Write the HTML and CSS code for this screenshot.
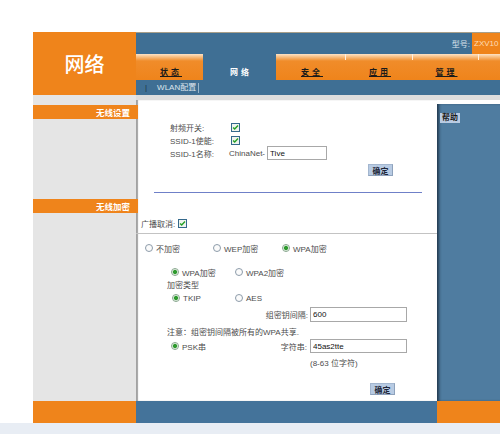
FILE: index.html
```html
<!DOCTYPE html>
<html lang="zh-CN">
<head>
<meta charset="utf-8">
<title>网络 - WLAN配置</title>
<link rel="stylesheet" href="styles.css">
</head>
<body>
<div class="page">
  <header class="header">
    <div class="logo">网络</div>
    <div class="header-main">
      <div class="model-row">
        <span class="model-label">型号:</span>
        <span class="model-box">ZXV10 I</span>
      </div>
      <nav class="tabs">
        <a class="tab w67">状态</a>
        <a class="tab active w73">网络</a>
        <a class="tab w69">安全</a>
        <a class="tab w67 sep">应用</a>
        <a class="tab w66 sep">管理</a>
        <span class="tab tab-fill sep"></span>
      </nav>
      <div class="subnav">
        <span class="sub-sep">|</span>
        <span class="sub-item">WLAN配置</span>
      </div>
    </div>
  </header>

  <div class="main">
    <aside class="sidebar">
      <div class="side-bar first">无线设置</div>
      <div class="side-bar second">无线加密</div>
    </aside>

    <section class="content">
      <div class="form-a">
        <div class="row">
          <span class="lbl">射频开关:</span>
          <svg class="cb" viewBox="0 0 9 9"><rect x=".5" y=".5" width="8" height="8" fill="#eef4ee" stroke="#34698c"/><path d="M2.1 4.4l1.6 1.7L7 2.6" fill="none" stroke="#25a025" stroke-width="1.4"/></svg>
        </div>
        <div class="row r2">
          <span class="lbl">SSID-1使能:</span>
          <svg class="cb" viewBox="0 0 9 9"><rect x=".5" y=".5" width="8" height="8" fill="#eef4ee" stroke="#34698c"/><path d="M2.1 4.4l1.6 1.7L7 2.6" fill="none" stroke="#25a025" stroke-width="1.4"/></svg>
        </div>
        <div class="row r3">
          <span class="lbl">SSID-1名称:</span>
          <span class="prefix">ChinaNet-</span>
          <input class="field ssid" type="text" value="Tive">
        </div>
      </div>
      <div class="btn-row btn-a"><span class="btn">确定</span></div>
      <div class="blue-line"></div>

      <div class="row broadcast">
        <span>广播取消:</span>
        <svg class="cb cb-b" viewBox="0 0 9 9"><rect x=".5" y=".5" width="8" height="8" fill="#eef4ee" stroke="#34698c"/><path d="M2.1 4.4l1.6 1.7L7 2.6" fill="none" stroke="#25a025" stroke-width="1.4"/></svg>
      </div>
      <div class="grey-line"></div>

      <div class="row radio-row">
        <span class="opt o68"><span class="radio"></span>不加密</span>
        <span class="opt o69"><span class="radio"></span>WEP加密</span>
        <span class="opt"><span class="radio on"></span>WPA加密</span>
      </div>
      <div class="row sub-row">
        <span class="opt o64"><span class="radio on"></span>WPA加密</span>
        <span class="opt"><span class="radio"></span>WPA2加密</span>
      </div>
      <div class="row type-label">加密类型</div>
      <div class="row tkip-row">
        <span class="opt o63"><span class="radio on"></span>TKIP</span>
        <span class="opt"><span class="radio"></span>AES</span>
      </div>
      <div class="row key-row">
        <span class="key-lbl">组密钥间隔:</span>
        <input class="field wide" type="text" value="600">
      </div>
      <div class="row note">注意：组密钥间隔被所有的WPA共享.</div>
      <div class="row psk-row">
        <span class="key-lbl psk"><span class="opt"><span class="radio on"></span>PSK串</span><span>字符串:</span></span>
        <input class="field wide h14" type="text" value="45as2tte">
      </div>
      <div class="row hint">(8-63 位字符)</div>
      <div class="btn-row btn-b"><span class="btn">确定</span></div>
    </section>

    <aside class="help">
      <div class="help-panel"><span class="help-label">帮助</span></div>
    </aside>
  </div>

  <footer class="footer">
    <div class="f-left"></div>
    <div class="f-mid"></div>
    <div class="f-right"></div>
  </footer>
</div>
<div class="bottom-strip"></div>
</body>
</html>
```

FILE: styles.css
```css
* { box-sizing: border-box; }
html, body { margin: 0; padding: 0; overflow: hidden; }
body {
  width: 500px;
  height: 434px;
  padding-top: 32px;
  background: #fff;
  font-family: "Liberation Sans", "Noto Sans CJK SC", sans-serif;
  font-size: 8px;
  color: #4c4c4c;
}
.page { width: 600px; margin-left: 33px; }

/* header */
.header { display: flex; height: 63px; }
.logo {
  width: 103px;
  background: #ef841b;
  color: #fff;
  font-family: "Noto Sans CJK SC", sans-serif;
  font-size: 20px;
  font-weight: 500;
  display: flex;
  align-items: center;
  justify-content: center;
}
.header-main { flex: 1; background: #3f6f94; display: flex; flex-direction: column; }
.model-row {
  height: 22px;
  border-top: 1px solid #a89f8a;
  display: flex;
  justify-content: flex-end;
}
.model-label { color: #dbe4ec; align-self: center; margin-right: 2px; }
.model-box {
  width: 161px;
  background: #ef841b;
  color: #fddcb6;
  padding-left: 2px;
  display: flex;
  align-items: center;
}
.tabs { height: 26px; display: flex; }
.tab {
  display: flex;
  align-items: center;
  justify-content: center;
  padding: 9px 0 0 3px;
  font-weight: bold;
  letter-spacing: 3px;
  color: #1a1a1a;
  text-decoration: underline;
  background: linear-gradient(#fde3c6 0, #f8bd80 3px, #f08c2a 7px, #ef841b 100%);
}
.tab.sep {
  background:
    linear-gradient(#fff0de, #fff0de) left top / 1px 6px no-repeat,
    linear-gradient(#fde3c6 0, #f8bd80 3px, #f08c2a 7px, #ef841b 100%);
}
.tab.active { background: none; color: #fff; text-decoration: none; }
.w67 { width: 67px; }
.w73 { width: 73px; }
.w69 { width: 69px; }
.w66 { width: 66px; }
.tab-fill { flex: 1; }
.subnav { height: 15px; display: flex; align-items: center; padding-left: 9px; }
.sub-sep { color: #1d3347; }
.sub-item { margin-left: 10px; padding-right: 2px; color: #dde5ec; border-right: 1px solid #9ab5ca; line-height: 10px; }

/* main */
.main { display: flex; height: 306px; }
.sidebar { width: 103px; background: #e5e5e5; padding-top: 10px; }
.side-bar {
  position: relative;
  z-index: 1;
  margin-right: -2px;
  height: 14px;
  background: #ef841b;
  color: #fff;
  font-weight: bold;
  font-size: 8.5px;
  display: flex;
  align-items: center;
  justify-content: flex-end;
  padding-right: 8px;
}
.side-bar.second { margin-top: 80px; }

.content {
  width: 301px;
  background: #fff;
  border-top: 5px solid #dddddd;
  box-shadow: inset 2px 0 1px #a2a2a2;
}
.row { display: flex; align-items: center; height: 12px; white-space: nowrap; }
.form-a { padding: 21px 0 0 34px; }
.r2 { margin-top: 1px; }
.r3 { height: 14px; }
.lbl { width: 59px; }
.cb { width: 9px; height: 9px; margin-left: 2px; }
.field {
  border: 1px solid #a8a8a8;
  padding: 0 2px;
  font-family: "Liberation Sans", "Noto Sans CJK SC", sans-serif;
  font-size: 8px;
  color: #111;
  background: #fff;
  outline: none;
  margin: 0;
}
.ssid { width: 60px; height: 14px; margin-left: 2px; }
.wide { width: 97px; height: 15px; }
.h14 { height: 14px; }

.btn-row { display: flex; justify-content: flex-end; height: 12px; }
.btn-a { margin-top: 4px; padding-right: 44px; }
.btn-b { margin-top: 15px; padding-right: 42px; }
.btn {
  width: 25px;
  height: 12px;
  background: #b8cbe3;
  border: 1px solid #a3b6cf;
  border-right-color: #8ea2bc;
  border-bottom-color: #8ea2bc;
  color: #1d2638;
  font-weight: bold;
  display: flex;
  align-items: center;
  justify-content: center;
}
.blue-line { margin: 16px 15px 0 18px; height: 1px; background: #6f80c8; }
.broadcast { margin-top: 24px; padding-left: 5px; }
.cb-b { margin-left: 3px; }
.grey-line { margin-top: 4px; height: 1px; background: #c3c3c3; }

.opt { display: flex; align-items: center; }
.radio {
  width: 8px;
  height: 8px;
  border: 1px solid #8d9caa;
  border-radius: 50%;
  background: #fbfbfb;
  margin-right: 3px;
  flex: none;
}
.radio.on {
  border-color: #86a58c;
  background: radial-gradient(circle, #2e9a2e 0 1.7px, #bfe1bf 2.3px, #fff 3px);
}
.o68 { width: 68px; }
.o69 { width: 69px; }
.o64 { width: 64px; }
.o63 { width: 63px; }
.radio-row { margin-top: 8px; padding-left: 9px; }
.sub-row { margin-top: 12px; padding-left: 35px; }
.type-label { padding-left: 31px; }
.tkip-row { margin-top: 2px; padding-left: 36px; }
.key-row { margin-top: 3px; height: 15px; }
.key-lbl { width: 174px; display: flex; justify-content: flex-end; padding-right: 2px; }
.key-lbl.psk { justify-content: space-between; padding-left: 35px; padding-right: 3px; }
.note { margin-top: 3px; padding-left: 31px; }
.psk-row { margin-top: 2px; height: 14px; }
.hint { margin-top: 3px; padding-left: 174px; }

.help { flex: 1; border-top: 5px solid #dddddd; padding-top: 4px; background: #fff; display: flex; }
.help-panel {
  flex: 1;
  background: #4f7ca0;
  box-shadow: inset 3px 0 3px -1px rgba(22, 40, 58, 0.8);
}
.help-label {
  display: inline-block;
  margin: 9px 0 0 3px;
  height: 10px;
  line-height: 10px;
  padding: 0 2px;
  background: #b9cbe2;
  color: #1a1a1a;
  font-weight: bold;
}

/* footer */
.footer { display: flex; height: 22px; }
.f-left { width: 103px; background: #ef841b; }
.f-mid { width: 301px; background: #44739a; }
.f-right { flex: 1; background: #ef841b; }
.bottom-strip { height: 11px; background: #e8edf4; }
```
